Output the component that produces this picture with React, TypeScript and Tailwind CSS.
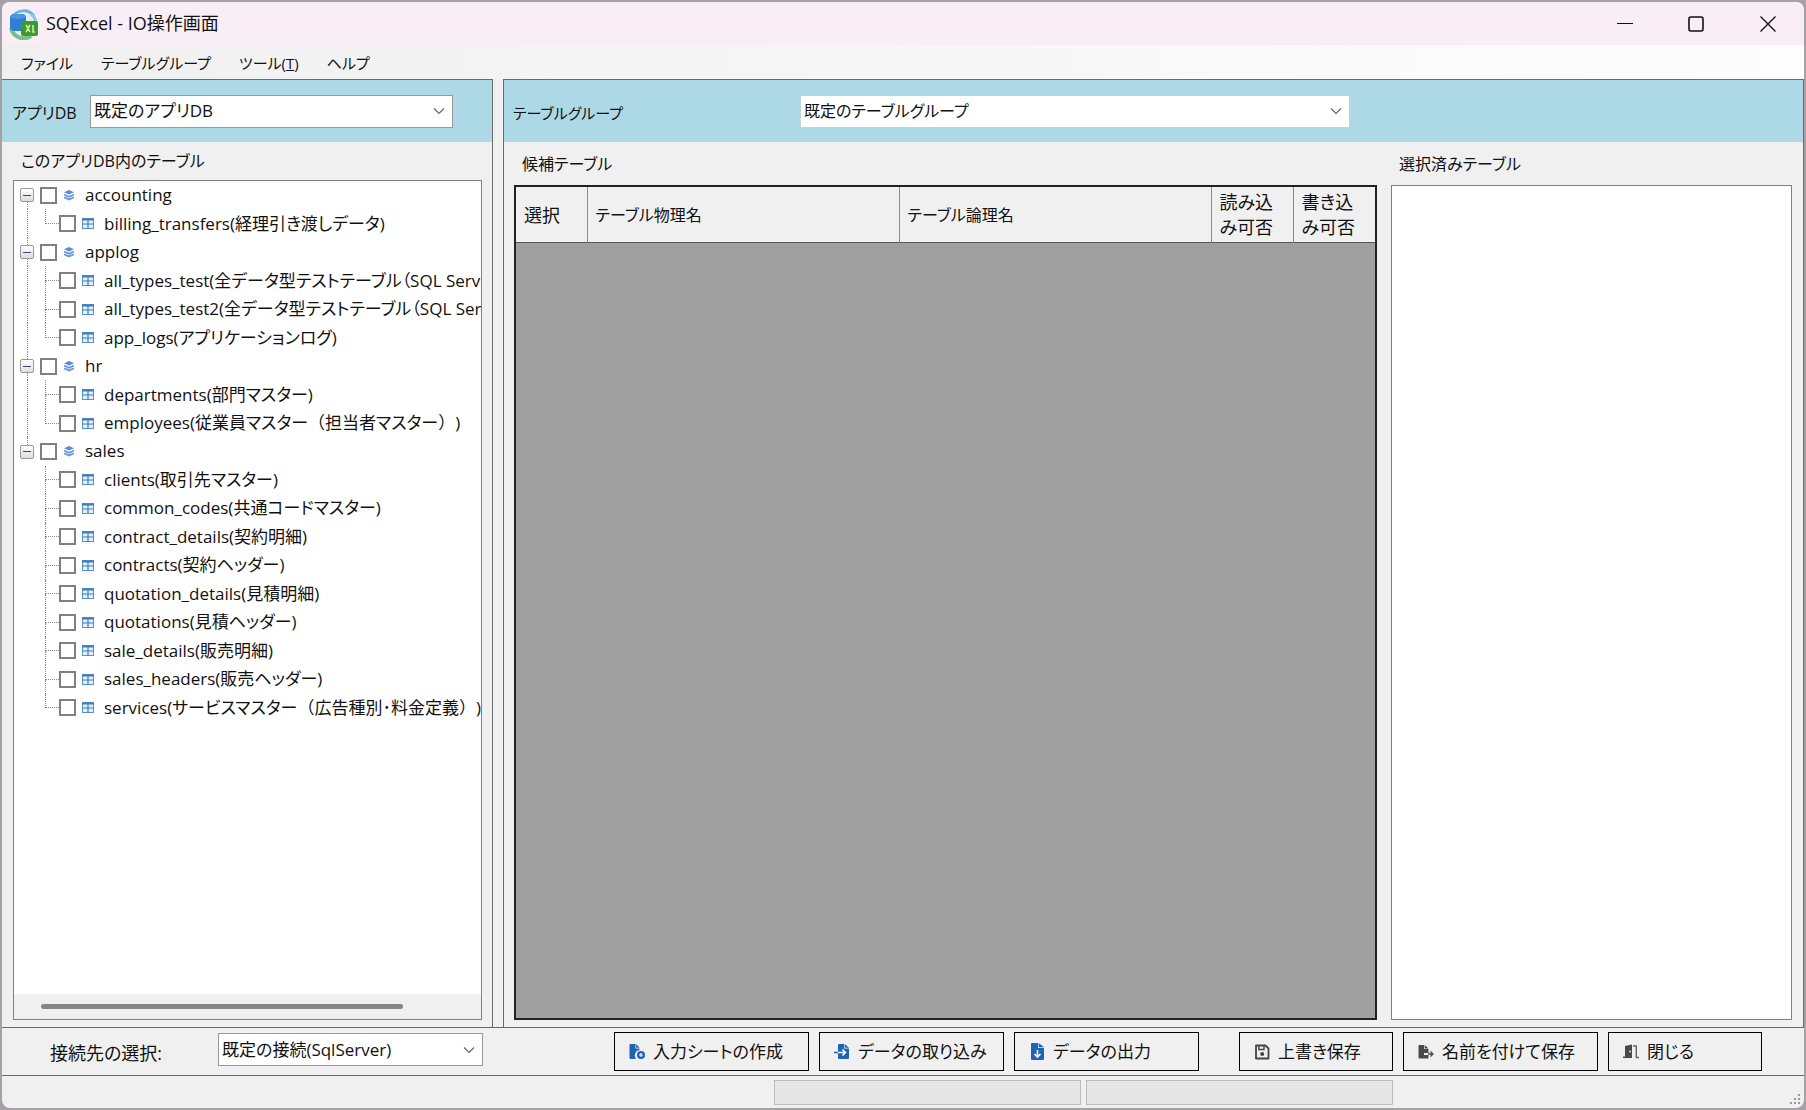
import { ReactNode } from 'react';

type TreeRow = { name: string; depth: 0 | 1; last?: boolean };

const tree: TreeRow[] = [
  { name: 'accounting', depth: 0 },
  { name: 'billing_transfers(経理引き渡しデータ)', depth: 1, last: true },
  { name: 'applog', depth: 0 },
  { name: 'all_types_test(全データ型テストテーブル（SQL Server）)', depth: 1 },
  { name: 'all_types_test2(全データ型テストテーブル（SQL Server）)', depth: 1 },
  { name: 'app_logs(アプリケーションログ)', depth: 1, last: true },
  { name: 'hr', depth: 0 },
  { name: 'departments(部門マスター)', depth: 1 },
  { name: 'employees(従業員マスター（担当者マスター）)', depth: 1, last: true },
  { name: 'sales', depth: 0, last: true },
  { name: 'clients(取引先マスター)', depth: 1 },
  { name: 'common_codes(共通コードマスター)', depth: 1 },
  { name: 'contract_details(契約明細)', depth: 1 },
  { name: 'contracts(契約ヘッダー)', depth: 1 },
  { name: 'quotation_details(見積明細)', depth: 1 },
  { name: 'quotations(見積ヘッダー)', depth: 1 },
  { name: 'sale_details(販売明細)', depth: 1 },
  { name: 'sales_headers(販売ヘッダー)', depth: 1 },
  { name: 'services(サービスマスター（広告種別･料金定義）)', depth: 1, last: true },
];

const lastRoot = tree.map((row) => row.depth).lastIndexOf(0);

function AppIcon() {
  return (
    <svg viewBox="0 0 32 32" className="size-8 shrink-0" aria-hidden="true">
      <circle cx="15" cy="16" r="13" fill="#e3f0f8" />
      <path d="M4 10a13 13 0 0 1 22-2" fill="none" stroke="#6fb0dc" strokeWidth="3" />
      <path d="M28 14a13 13 0 0 0-5-8" fill="none" stroke="#8fc6e4" strokeWidth="3" />
      <path d="M3 20a13 13 0 0 0 20 8" fill="none" stroke="#79bf8a" strokeWidth="4" />
      <rect x="2" y="6" width="16" height="17" rx="4" fill="#2f7fd3" />
      <ellipse cx="10" cy="8.500" rx="7.500" ry="2.500" fill="#5095de" />
      <rect x="13" y="13" width="17" height="15" rx="2" fill="#3f9a2c" />
      <path d="M18 17l4 7M22 17l-4 7M25 17v7h2" fill="none" stroke="#c9ecae" strokeWidth="1.600" />
    </svg>
  );
}

function LayersIcon() {
  return (
    <svg viewBox="0 0 10 11" className="h-[11px] w-[10px] shrink-0" aria-hidden="true">
      <path d="M5 0l5 2.300-5 2.300L0 2.300z" fill="#5b8bd8" />
      <path d="M0 4.500l5 2.200L10 4.500M0 7.200l5 2.200L10 7.200" fill="none" stroke="#6d97dc" strokeWidth="1.800" />
    </svg>
  );
}

function TableIcon() {
  return (
    <svg viewBox="0 0 12 11" className="h-[11px] w-3 shrink-0" aria-hidden="true">
      <rect x="0.500" y="0.500" width="11" height="10" fill="#e3effa" stroke="#5a92c6" />
      <path d="M0 1.500h12" stroke="#3f7db8" strokeWidth="2" />
      <path d="M6 2v8.500M0.500 6h11" stroke="#3f7db8" strokeWidth="1.200" />
    </svg>
  );
}

function Chevron() {
  return (
    <svg
      viewBox="0 0 12 7"
      className="pointer-events-none absolute top-1/2 right-2 h-[7px] w-3 -translate-y-1/2"
      aria-hidden="true"
    >
      <path d="M1 1l5 5 5-5" fill="none" stroke="#666" strokeWidth="1.200" />
    </svg>
  );
}

function ComboBox({ id, value, className }: { id: string; value: string; className: string }) {
  return (
    <div className={`relative h-[33px] ${className}`}>
      <select id={id} className="size-full appearance-none border border-inherit bg-white pl-[3px] outline-none">
        <option>{value}</option>
      </select>
      <Chevron />
    </div>
  );
}

function ActionButton({ icon, label, className }: { icon: ReactNode; label: string; className: string }) {
  return (
    <button
      type="button"
      className={`flex h-[39px] shrink-0 items-center gap-2 border border-black bg-[#f0f0f0] pl-[14px] whitespace-nowrap ${className}`}
    >
      {icon}
      {label}
    </button>
  );
}

function SheetAddIcon() {
  return (
    <svg viewBox="0 0 16 16" className="size-4 shrink-0" aria-hidden="true">
      <path d="M1.500 0H6.500v4.500h4V6a5.500 5.500 0 0 0-3.500 9H1.500q-1 0-1-1V1q0-1 1-1z" fill="#1f63b5" />
      <path d="M7.200 0l3.300 3.800H7.200z" fill="#1f63b5" />
      <circle cx="12" cy="11" r="4" fill="#1f63b5" />
      <path d="M12 9v4M10 11h4" stroke="#fff" strokeWidth="1.200" />
    </svg>
  );
}

function ImportIcon() {
  return (
    <svg viewBox="0 0 16 16" className="size-4 shrink-0" aria-hidden="true">
      <path d="M5 0h5v4.500h5V14q0 1-1 1H5q-1 0-1-1V1q0-1 1-1z" fill="#1f63b5" />
      <path d="M10.700 0l4.300 3.800h-4.300z" fill="#1f63b5" />
      <path d="M0 8.500h4" stroke="#1f63b5" strokeWidth="1.600" />
      <path d="M4 8.500h7.500M8.500 5.500l3 3-3 3" fill="none" stroke="#fff" strokeWidth="1.600" />
    </svg>
  );
}

function ExportIcon() {
  return (
    <svg viewBox="0 0 16 18" className="h-[18px] w-4 shrink-0" aria-hidden="true">
      <path d="M3 0h6v5h6v11q0 1-1 1H3q-1 0-1-1V1q0-1 1-1z" fill="#1f63b5" />
      <path d="M9.700 0l5.300 4.300h-5.300z" fill="#1f63b5" />
      <path d="M8.500 7v7M5.500 11l3 3 3-3" fill="none" stroke="#fff" strokeWidth="1.600" />
    </svg>
  );
}

function SaveIcon() {
  return (
    <svg viewBox="0 0 16 16" className="size-4 shrink-0" aria-hidden="true">
      <path d="M2 1.500h9.500l3 3v10H2z" fill="none" stroke="#444" strokeWidth="1.800" strokeLinejoin="round" />
      <path d="M4.800 2v3.500H10V2" fill="none" stroke="#444" strokeWidth="1.400" />
      <circle cx="8.200" cy="10" r="2" fill="#444" />
    </svg>
  );
}

function SaveAsIcon() {
  return (
    <svg viewBox="0 0 16 16" className="size-4 shrink-0" aria-hidden="true">
      <path d="M1.500 1H6v4h4.500v4H6v2h4.500v3.500h-9q-1 0-1-1V2q0-1 1-1z" fill="#4a4a4a" />
      <path d="M6.700 1l3.800 3.400H6.700z" fill="#4a4a4a" />
      <path d="M10 10h5M12.500 7.500L15 10l-2.500 2.500" fill="none" stroke="#4a4a4a" strokeWidth="1.300" />
    </svg>
  );
}

function DoorIcon() {
  return (
    <svg viewBox="0 0 16 16" className="size-4 shrink-0" aria-hidden="true">
      <path d="M2 2l7-1.500V14H0v-1.500h2z" fill="#4a4a4a" />
      <path d="M10 2h3.300v11.500H16" fill="none" stroke="#666" strokeWidth="1.400" />
      <circle cx="7" cy="7.500" r="0.900" fill="#f0f0f0" />
    </svg>
  );
}

function TitleBar() {
  return (
    <header className="flex h-[43px] items-center bg-[#f9eef6] pl-[6px]">
      <AppIcon />
      <h1 className="ml-[6px] flex-1 pb-[2px] text-[18px]">SQExcel - IO操作画面</h1>
      <div className="flex h-full">
        <button type="button" aria-label="最小化" className="flex w-[71px] items-center justify-center">
          <svg viewBox="0 0 16 16" className="size-4" aria-hidden="true">
            <path d="M0 7.500h16" stroke="#111" />
          </svg>
        </button>
        <button type="button" aria-label="最大化" className="flex w-[71px] items-center justify-center">
          <svg viewBox="0 0 16 16" className="size-4" aria-hidden="true">
            <rect x="1" y="1" width="14" height="14" rx="2" fill="none" stroke="#111" strokeWidth="1.600" />
          </svg>
        </button>
        <button type="button" aria-label="閉じる" className="flex w-[73px] items-center justify-center">
          <svg viewBox="0 0 16 16" className="size-4" aria-hidden="true">
            <path d="M0.500 0.500l15 15M15.500 0.500l-15 15" stroke="#111" strokeWidth="1.400" />
          </svg>
        </button>
      </div>
    </header>
  );
}

// Full-width brackets keep their full em, except an opening one before Latin text.
function NodeName({ name }: { name: string }) {
  return (
    <span className="[text-spacing-trim:space-all]">
      {name.split(/(（(?![A-Za-z])|）)/).map((part, i) =>
        part === '（' || part === '）' ? (
          <span key={i} className="[font-feature-settings:normal]">
            {part}
          </span>
        ) : (
          part
        ),
      )}
    </span>
  );
}

function TreeItem({ row, index }: { row: TreeRow; index: number }) {
  const id = `node-${index}`;

  if (row.depth === 0) {
    return (
      <li className="flex items-stretch">
        <span className="flex w-[26px] shrink-0 flex-col items-center">
          <span className={`w-px flex-1 border-l border-dotted ${index === 0 ? 'border-transparent' : 'border-[#888]'}`} />
          <button
            type="button"
            aria-label={`${row.name}を折りたたむ`}
            className="flex size-[14px] shrink-0 items-center justify-center rounded-xs border border-[#999] bg-linear-to-b from-white to-[#ddd]"
          >
            <span className="h-px w-2 bg-[#446]" />
          </button>
          <span className={`w-px flex-1 border-l border-dotted ${row.last ? 'border-transparent' : 'border-[#888]'}`} />
        </span>
        <label htmlFor={id} className="flex items-center whitespace-nowrap">
          <input
            id={id}
            type="checkbox"
            className="size-[17px] shrink-0 appearance-none border-2 border-[#808080] bg-white"
          />
          <span className="mr-[11px] ml-[7px]">
            <LayersIcon />
          </span>
          {row.name}
        </label>
      </li>
    );
  }

  return (
    <li className="flex items-stretch">
      <span className="flex w-[26px] shrink-0 justify-center">
        <span className={`w-px border-l border-dotted ${index < lastRoot ? 'border-[#888]' : 'border-transparent'}`} />
      </span>
      <span className="ml-[5px] flex w-[14px] shrink-0 flex-col">
        <span className="flex-1 border-b border-l border-dotted border-[#888]" />
        <span className={`flex-1 border-l border-dotted ${row.last ? 'border-transparent' : 'border-[#888]'}`} />
      </span>
      <label htmlFor={id} className="flex items-center whitespace-nowrap">
        <input
          id={id}
          type="checkbox"
          className="size-[17px] shrink-0 appearance-none border-2 border-[#808080] bg-white"
        />
        <span className="mr-[10px] ml-[6px]">
          <TableIcon />
        </span>
        <NodeName name={row.name} />
      </label>
    </li>
  );
}

function TablesPanel() {
  return (
    <section className="flex w-[491px] shrink-0 flex-col border-t border-r border-[#6a6a6a]">
      <div className="flex h-[62px] items-center bg-[#add8e6] pl-[10px]">
        <label htmlFor="app-db" className="w-[78px] pt-1 text-base">
          アプリDB
        </label>
        <ComboBox id="app-db" value="既定のアプリDB" className="w-[363px] border-[#999]" />
      </div>
      <h2 className="flex h-[38px] items-center pl-[19px] text-base">このアプリDB内のテーブル</h2>
      <div className="mr-[10px] mb-[7px] ml-[11px] flex flex-1 flex-col overflow-hidden border border-[#808080] bg-white">
        <ul className="grid h-[541px] auto-rows-fr overflow-hidden">
          {tree.map((row, i) => (
            <TreeItem key={row.name} row={row} index={i} />
          ))}
        </ul>
        <div className="mt-auto flex h-[25px] items-center bg-[#f0f0f0] pl-[27px]">
          <div className="h-[5px] w-[362px] rounded-full bg-[#858585]" />
        </div>
      </div>
    </section>
  );
}

function GroupPanel() {
  return (
    <section className="flex flex-1 flex-col border border-b-0 border-[#6a6a6a]">
      <div className="flex h-[62px] items-center bg-[#add8e6] pl-[9px]">
        <label htmlFor="table-group" className="w-[287px] pt-1 text-[15px]">
          テーブルグループ
        </label>
        <ComboBox
          id="table-group"
          value="既定のテーブルグループ"
          className="w-[550px] border-[#c4d3d8] text-base"
        />
      </div>
      <div className="flex flex-1 gap-[14px] pr-[11px] pb-[7px] pl-[10px]">
        <div className="flex flex-1 flex-col">
          <h2 className="flex h-[43px] items-center pl-2 text-base">候補テーブル</h2>
          <div className="flex-1 border-2 border-[#222] bg-[#a0a0a0]">
            <table className="w-full table-fixed border-collapse bg-[#f0f0f0] text-left leading-[25px]">
              <thead>
                <tr className="h-[55px] border-b border-[#555]">
                  <th className="w-[71px] border-r border-[#888] pt-[2px] pl-2 text-[18px] font-normal">選択</th>
                  <th className="border-r border-[#888] pt-[2px] pl-2 text-base font-normal">テーブル物理名</th>
                  <th className="border-r border-[#888] pt-[2px] pl-2 text-base font-normal">テーブル論理名</th>
                  <th className="w-[82px] border-r border-[#888] pt-[2px] pl-2 text-[18px] leading-[25px] font-normal">
                    読み込
                    <br />
                    み可否
                  </th>
                  <th className="w-[82px] pt-[2px] pl-2 text-[18px] leading-[25px] font-normal">
                    書き込
                    <br />
                    み可否
                  </th>
                </tr>
              </thead>
            </table>
          </div>
        </div>
        <div className="flex w-[401px] shrink-0 flex-col">
          <h2 className="flex h-[43px] items-center pl-2 text-base">選択済みテーブル</h2>
          <div className="flex-1 border border-[#808080] bg-white" />
        </div>
      </div>
    </section>
  );
}

function ActionBar() {
  return (
    <div className="flex h-[49px] items-center border-y border-[#6a6a6a] pr-[42px] pl-12">
      <label htmlFor="connection" className="w-[168px] pt-[2px] text-[18px]">
        接続先の選択:
      </label>
      <ComboBox id="connection" value="既定の接続(SqlServer)" className="mb-1 w-[265px] border-[#999]" />
      <div className="ml-auto flex gap-[10px]">
        <ActionButton icon={<SheetAddIcon />} label="入力シートの作成" className="w-[195px]" />
        <ActionButton icon={<ImportIcon />} label="データの取り込み" className="w-[185px]" />
        <ActionButton icon={<ExportIcon />} label="データの出力" className="w-[185px]" />
        <ActionButton icon={<SaveIcon />} label="上書き保存" className="ml-[30px] w-[154px]" />
        <ActionButton icon={<SaveAsIcon />} label="名前を付けて保存" className="w-[195px]" />
        <ActionButton icon={<DoorIcon />} label="閉じる" className="w-[154px]" />
      </div>
    </div>
  );
}

function StatusBar() {
  return (
    <footer className="flex h-8 items-start justify-end gap-[5px] pt-1 pr-[3px]">
      <div className="h-[25px] w-[307px] border border-[#bcbcbc] bg-[#e6e6e6]" />
      <div className="h-[25px] w-[307px] border border-[#bcbcbc] bg-[#e6e6e6]" />
      <div className="flex w-[403px] justify-end self-end pb-[2px]">
        <svg viewBox="0 0 12 12" className="size-3" fill="#999" aria-hidden="true">
          <path d="M9 0h2v2H9zM9 4h2v2H9zM5 4h2v2H5zM9 8h2v2H9zM5 8h2v2H5zM1 8h2v2H1z" />
        </svg>
      </div>
    </footer>
  );
}

export default function App() {
  return (
    <div className="h-screen bg-[#a5a1a4] p-[2px] font-['Open_Sans','Noto_Sans_CJK_JP',sans-serif] text-[17px] leading-6 text-[#111]">
      <div className="flex h-full flex-col overflow-hidden rounded-lg bg-[#f0f0f0] [font-feature-settings:'palt']">
        <TitleBar />
        <nav className="flex h-[34px] items-center gap-7 bg-linear-to-r from-[#f0f0f0] to-[#fdfdfd] pt-[2px] pl-[19px] text-[15px]">
          <button type="button">ファイル</button>
          <button type="button">テーブルグループ</button>
          <button type="button">
            ツール(<u>T</u>)
          </button>
          <button type="button">ヘルプ</button>
        </nav>
        <main className="flex flex-1 gap-[10px]">
          <TablesPanel />
          <GroupPanel />
        </main>
        <ActionBar />
        <StatusBar />
      </div>
    </div>
  );
}
